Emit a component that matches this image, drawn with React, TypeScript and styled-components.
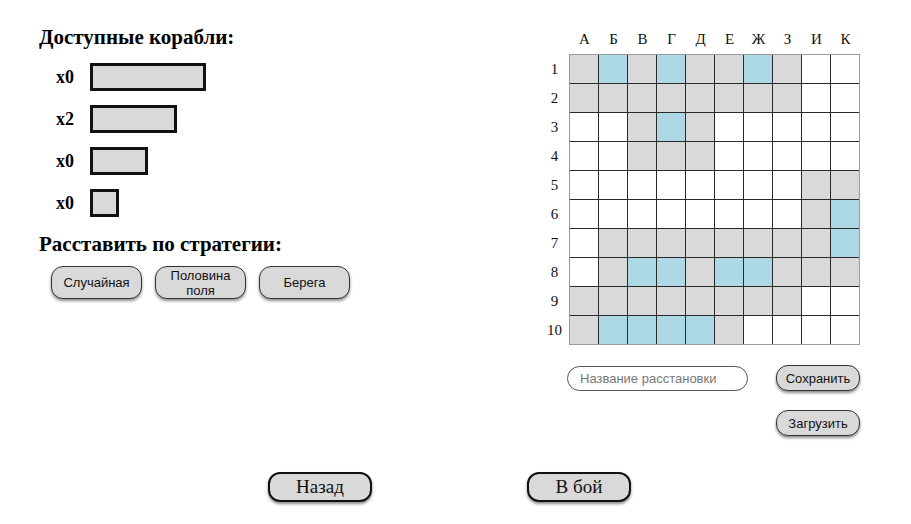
import React from "react";
import styled, { createGlobalStyle } from "styled-components";

const GlobalStyle = createGlobalStyle`
  html, body { margin: 0; padding: 0; background: #ffffff; }
  body { font-family: "Liberation Serif", "Times New Roman", serif; color: #000; }
`;

const Page = styled.div`
  width: 911px;
  height: 524px;
  box-sizing: border-box;
  display: flex;
  flex-direction: column;
`;

const Top = styled.div`
  display: flex;
  justify-content: space-between;
  padding: 25px 51px 0 39px;
  height: 472px;
  box-sizing: border-box;
`;

const LeftPanel = styled.div`
  display: flex;
  flex-direction: column;
  padding-top: 0;
`;

const Heading = styled.h2`
  margin: 0;
  font-family: "Liberation Serif", "Times New Roman", serif;
  font-weight: bold;
  font-size: 21px;
  line-height: 24px;
`;

const ShipList = styled.div`
  display: flex;
  flex-direction: column;
  gap: 14px;
  margin: 14px 0 15px 17px;
`;

const ShipRow = styled.div`
  display: flex;
  align-items: center;
  gap: 15px;
`;

const ShipCount = styled.span`
  width: 19px;
  font-weight: bold;
  font-size: 18px;
  line-height: 20px;
`;

const Ship = styled.div<{ $size: number }>`
  width: ${(p) => p.$size * 29 - 6}px;
  height: 22px;
  border: 3px solid #111;
  background: #d9d9d9;
`;

const StrategyRow = styled.div`
  display: flex;
  gap: 13px;
  margin: 10px 0 0 12px;
`;

const StrategyButton = styled.button`
  width: 91px;
  height: 33px;
  padding: 0 4px;
  border: 1px solid #333;
  border-radius: 12px;
  background: #d9d9d9;
  box-shadow: 0 2px 3px rgba(0, 0, 0, 0.45);
  font-family: "Liberation Sans", Arial, sans-serif;
  font-size: 13px;
  line-height: 15px;
  color: #111;
`;

const RightPanel = styled.div`
  display: flex;
  flex-direction: column;
  width: 320px;
`;

const Field = styled.div`
  display: grid;
  grid-template-columns: 29px 291px;
  grid-template-rows: 29px 291px;
`;

const ColLabels = styled.div`
  grid-column: 2;
  display: grid;
  grid-template-columns: repeat(10, 29px);
  padding-left: 1px;
`;

const RowLabels = styled.div`
  grid-column: 1;
  grid-row: 2;
  display: grid;
  grid-template-rows: repeat(10, 29px);
  padding-top: 1px;
`;

const Label = styled.div`
  display: flex;
  align-items: center;
  justify-content: center;
  font-size: 15px;
  color: #111;
`;

const Board = styled.div`
  grid-column: 2;
  grid-row: 2;
  display: grid;
  grid-template-columns: repeat(10, 28px);
  grid-template-rows: repeat(10, 28px);
  gap: 1px;
  background: #2a2a2a;
  border: 1px solid #9a9a9a;
`;

const Cell = styled.div<{ $kind: string }>`
  background: ${(p) =>
    p.$kind === "B" ? "#add8e6" : p.$kind === "G" ? "#d9d9d9" : "#ffffff"};
`;

const Controls = styled.div`
  display: flex;
  flex-direction: column;
  align-items: flex-end;
  gap: 19px;
  margin-top: 20px;
`;

const SaveRow = styled.div`
  align-self: stretch;
  display: flex;
  justify-content: space-between;
  align-items: center;
  padding-left: 27px;
`;

const NameInput = styled.input`
  width: 181px;
  height: 25px;
  box-sizing: border-box;
  border: 1px solid #555;
  border-radius: 13px;
  padding: 0 12px;
  font-family: "Liberation Sans", Arial, sans-serif;
  font-size: 13px;
  outline: none;
  &::placeholder { color: #777; }
`;

const SmallButton = styled.button`
  width: 84px;
  height: 26px;
  padding: 0;
  border: 1px solid #333;
  border-radius: 12px;
  background: #d9d9d9;
  box-shadow: 0 2px 3px rgba(0, 0, 0, 0.45);
  font-family: "Liberation Sans", Arial, sans-serif;
  font-size: 13px;
  color: #111;
`;

const Bottom = styled.div`
  display: flex;
  justify-content: center;
  gap: 155px;
  padding-right: 12px;
`;

const BigButton = styled.button`
  width: 104px;
  height: 30px;
  padding: 0;
  border: 2px solid #111;
  border-radius: 12px;
  background: #d9d9d9;
  box-shadow: 0 2px 3px rgba(0, 0, 0, 0.45);
  font-family: "Liberation Serif", "Times New Roman", serif;
  font-size: 19px;
  color: #111;
`;

const letters = ["А", "Б", "В", "Г", "Д", "Е", "Ж", "З", "И", "К"];
const grid = [
  "GBGBGGBGWW",
  "GGGGGGGGWW",
  "WWGBGWWWWW",
  "WWGGGWWWWW",
  "WWWWWWWWGG",
  "WWWWWWWWGB",
  "WGGGGGGGGB",
  "WGBBGBBGGG",
  "GGGGGGGGWW",
  "GBBBBGWWWW",
];

const ships = [
  { count: 0, size: 4 },
  { count: 2, size: 3 },
  { count: 0, size: 2 },
  { count: 0, size: 1 },
];

export default function App() {
  return (
    <>
      <GlobalStyle />
      <Page>
        <Top>
          <LeftPanel>
            <Heading>Доступные корабли:</Heading>
            <ShipList>
              {ships.map((s, i) => (
                <ShipRow key={i}>
                  <ShipCount>x{s.count}</ShipCount>
                  <Ship $size={s.size} />
                </ShipRow>
              ))}
            </ShipList>
            <Heading>Расставить по стратегии:</Heading>
            <StrategyRow>
              <StrategyButton>Случайная</StrategyButton>
              <StrategyButton>Половина поля</StrategyButton>
              <StrategyButton>Берега</StrategyButton>
            </StrategyRow>
          </LeftPanel>
          <RightPanel>
            <Field>
              <ColLabels>
                {letters.map((l) => (
                  <Label key={l}>{l}</Label>
                ))}
              </ColLabels>
              <RowLabels>
                {grid.map((_, i) => (
                  <Label key={i}>{i + 1}</Label>
                ))}
              </RowLabels>
              <Board>
                {grid.flatMap((row, r) =>
                  row.split("").map((k, c) => <Cell key={`${r}-${c}`} $kind={k} />)
                )}
              </Board>
            </Field>
            <Controls>
              <SaveRow>
                <NameInput placeholder="Название расстановки" />
                <SmallButton>Сохранить</SmallButton>
              </SaveRow>
              <SmallButton>Загрузить</SmallButton>
            </Controls>
          </RightPanel>
        </Top>
        <Bottom>
          <BigButton>Назад</BigButton>
          <BigButton>В бой</BigButton>
        </Bottom>
      </Page>
    </>
  );
}
